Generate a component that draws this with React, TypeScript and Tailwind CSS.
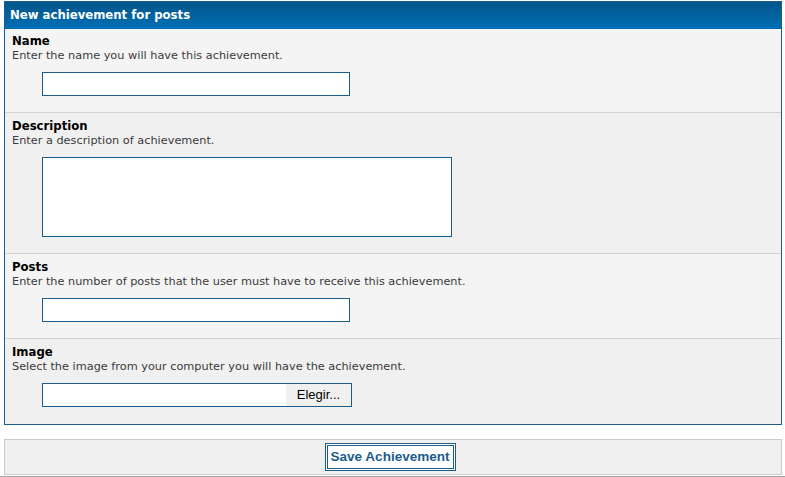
const fields = [
  { label: 'Name', help: 'Enter the name you will have this achievement.', kind: 'text', bg: 'bg-[#f4f4f4]' },
  { label: 'Description', help: 'Enter a description of achievement.', kind: 'area', bg: 'bg-[#f0f0f0]' },
  {
    label: 'Posts',
    help: 'Enter the number of posts that the user must have to receive this achievement.',
    kind: 'text',
    bg: 'bg-[#f4f4f4]',
  },
  { label: 'Image', help: 'Select the image from your computer you will have the achievement.', kind: 'file', bg: 'bg-[#f0f0f0]' },
]

function Field({
  label,
  help,
  kind,
  bg,
  first,
  last,
}: {
  label: string
  help: string
  kind: string
  bg: string
  first: boolean
  last: boolean
}) {
  return (
    <div
      className={`${bg} px-[7px] ${first ? 'pt-[5px]' : 'pt-[6px]'} ${last ? 'pb-[17px]' : 'pb-[16px] border-b border-[#d2d2d2]'}`}
    >
      <div className="text-[11.7px] leading-[15px] font-bold text-black">{label}</div>
      <div className="text-[11.3px] leading-[14px] text-[#3a3a3a]">{help}</div>
      <div className="mt-[9px] pl-[30px]">
        {kind === 'text' && <div className="h-[24px] w-[308px] border border-[#1b5d8d] bg-white" />}
        {kind === 'area' && <div className="h-[80px] w-[410px] border border-[#1b5d8d] bg-white" />}
        {kind === 'file' && (
          <div className="flex h-[24px] w-[310px] border border-[#1b5d8d] bg-white">
            <div className="flex-1" />
            <div className="flex w-[65px] items-center justify-center bg-[#f0f0f0] font-['Liberation_Sans',Arial,sans-serif] text-[13px] text-black">
              Elegir...
            </div>
          </div>
        )}
      </div>
    </div>
  )
}

export default function App() {
  return (
    <div className="h-[477px] w-[785px] bg-white font-['DejaVu_Sans',Verdana,sans-serif]">
      <div className="mx-[4px] mt-px w-[778px] border border-[#1b5d8d]">
        <div className="flex h-[27px] items-center bg-gradient-to-b from-[#03558a] to-[#0070b6] px-[5px] text-[11.7px] font-bold text-white">
          New achievement for posts
        </div>
        {fields.map((f, i) => (
          <Field key={f.label} {...f} first={i === 0} last={i === fields.length - 1} />
        ))}
      </div>
      <div className="border-b-2 border-[#a3a3a3] pb-px">
        <div className="mx-[4px] mt-[14px] flex h-[36px] w-[778px] items-center justify-center border border-[#cccccc] bg-[#f0f0f0]">
          <button className="-ml-[6px] h-[28px] w-[131px] border-[3px] border-double border-[#1b5d8d] bg-white font-['Liberation_Sans',Arial,sans-serif] text-[13.5px] font-bold text-[#1b5d8d]">
            Save Achievement
          </button>
        </div>
      </div>
    </div>
  )
}
